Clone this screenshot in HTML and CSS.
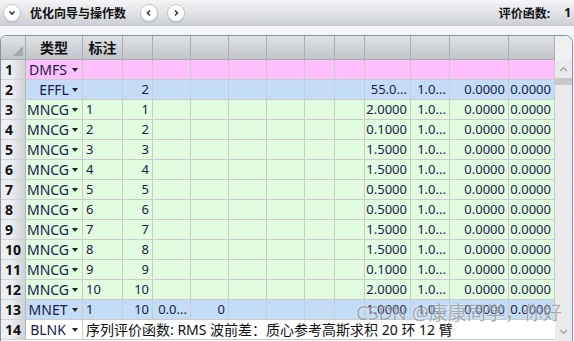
FILE: index.html
```html
<!DOCTYPE html>
<html lang="zh">
<head>
  <meta charset="UTF-8">
  <title>优化向导与操作数</title>
  <link rel="stylesheet" href="styles.css">
</head>
<body>

  <div class="toolbar">
    <button class="round">
      <svg width="10" height="10" viewBox="0 0 10 10"><path d="M2.5 3.5 L5 6 L7.5 3.5" fill="none" stroke="#3a3a3a" stroke-width="1.6"/></svg>
    </button>
    <span class="title">优化向导与操作数</span>
    <button class="round nav">
      <svg width="10" height="10" viewBox="0 0 10 10"><path d="M6 2.5 L3.5 5 L6 7.5" fill="none" stroke="#3a3a3a" stroke-width="1.6"/></svg>
    </button>
    <button class="round">
      <svg width="10" height="10" viewBox="0 0 10 10"><path d="M4 2.5 L6.5 5 L4 7.5" fill="none" stroke="#3a3a3a" stroke-width="1.6"/></svg>
    </button>
    <span class="spacer"></span>
    <span class="merit">评价函数:</span>
    <span class="merit-val">1</span>
  </div>

  <div class="panel">
    <div class="grid">
      <div class="row head">
        <div class="c corner"><span class="tri"></span></div>
        <div class="c">类型</div><div class="c">标注</div>
        <div class="c"></div><div class="c"></div><div class="c"></div><div class="c"></div><div class="c"></div>
        <div class="c"></div><div class="c"></div><div class="c"></div><div class="c"></div><div class="c"></div><div class="c"></div>
      </div>

      <div class="row pink">
        <div class="c n">1</div>
        <div class="c type"><span>DMFS</span><i></i></div>
        <div class="c"></div><div class="c"></div><div class="c"></div><div class="c"></div><div class="c"></div><div class="c"></div>
        <div class="c"></div><div class="c"></div><div class="c"></div><div class="c"></div><div class="c"></div><div class="c"></div>
      </div>

      <div class="row blue">
        <div class="c n">2</div>
        <div class="c type shift"><span>EFFL</span><i></i></div>
        <div class="c"></div><div class="c r">2</div><div class="c"></div><div class="c"></div><div class="c"></div><div class="c"></div>
        <div class="c"></div><div class="c"></div><div class="c r">55.0...</div><div class="c r">1.0...</div><div class="c r">0.0000</div><div class="c r">0.0000</div>
      </div>

      <div class="row green">
        <div class="c n">3</div>
        <div class="c type"><span>MNCG</span><i></i></div>
        <div class="c l">1</div><div class="c r">1</div><div class="c"></div><div class="c"></div><div class="c"></div><div class="c"></div>
        <div class="c"></div><div class="c"></div><div class="c r">2.0000</div><div class="c r">1.0...</div><div class="c r">0.0000</div><div class="c r">0.0000</div>
      </div>

      <div class="row green">
        <div class="c n">4</div>
        <div class="c type"><span>MNCG</span><i></i></div>
        <div class="c l">2</div><div class="c r">2</div><div class="c"></div><div class="c"></div><div class="c"></div><div class="c"></div>
        <div class="c"></div><div class="c"></div><div class="c r">0.1000</div><div class="c r">1.0...</div><div class="c r">0.0000</div><div class="c r">0.0000</div>
      </div>

      <div class="row green">
        <div class="c n">5</div>
        <div class="c type"><span>MNCG</span><i></i></div>
        <div class="c l">3</div><div class="c r">3</div><div class="c"></div><div class="c"></div><div class="c"></div><div class="c"></div>
        <div class="c"></div><div class="c"></div><div class="c r">1.5000</div><div class="c r">1.0...</div><div class="c r">0.0000</div><div class="c r">0.0000</div>
      </div>

      <div class="row green">
        <div class="c n">6</div>
        <div class="c type"><span>MNCG</span><i></i></div>
        <div class="c l">4</div><div class="c r">4</div><div class="c"></div><div class="c"></div><div class="c"></div><div class="c"></div>
        <div class="c"></div><div class="c"></div><div class="c r">1.5000</div><div class="c r">1.0...</div><div class="c r">0.0000</div><div class="c r">0.0000</div>
      </div>

      <div class="row green">
        <div class="c n">7</div>
        <div class="c type"><span>MNCG</span><i></i></div>
        <div class="c l">5</div><div class="c r">5</div><div class="c"></div><div class="c"></div><div class="c"></div><div class="c"></div>
        <div class="c"></div><div class="c"></div><div class="c r">0.5000</div><div class="c r">1.0...</div><div class="c r">0.0000</div><div class="c r">0.0000</div>
      </div>

      <div class="row green">
        <div class="c n">8</div>
        <div class="c type"><span>MNCG</span><i></i></div>
        <div class="c l">6</div><div class="c r">6</div><div class="c"></div><div class="c"></div><div class="c"></div><div class="c"></div>
        <div class="c"></div><div class="c"></div><div class="c r">0.5000</div><div class="c r">1.0...</div><div class="c r">0.0000</div><div class="c r">0.0000</div>
      </div>

      <div class="row green">
        <div class="c n">9</div>
        <div class="c type"><span>MNCG</span><i></i></div>
        <div class="c l">7</div><div class="c r">7</div><div class="c"></div><div class="c"></div><div class="c"></div><div class="c"></div>
        <div class="c"></div><div class="c"></div><div class="c r">1.5000</div><div class="c r">1.0...</div><div class="c r">0.0000</div><div class="c r">0.0000</div>
      </div>

      <div class="row green">
        <div class="c n">10</div>
        <div class="c type"><span>MNCG</span><i></i></div>
        <div class="c l">8</div><div class="c r">8</div><div class="c"></div><div class="c"></div><div class="c"></div><div class="c"></div>
        <div class="c"></div><div class="c"></div><div class="c r">1.5000</div><div class="c r">1.0...</div><div class="c r">0.0000</div><div class="c r">0.0000</div>
      </div>

      <div class="row green">
        <div class="c n">11</div>
        <div class="c type"><span>MNCG</span><i></i></div>
        <div class="c l">9</div><div class="c r">9</div><div class="c"></div><div class="c"></div><div class="c"></div><div class="c"></div>
        <div class="c"></div><div class="c"></div><div class="c r">0.1000</div><div class="c r">1.0...</div><div class="c r">0.0000</div><div class="c r">0.0000</div>
      </div>

      <div class="row green">
        <div class="c n">12</div>
        <div class="c type"><span>MNCG</span><i></i></div>
        <div class="c l">10</div><div class="c r">10</div><div class="c"></div><div class="c"></div><div class="c"></div><div class="c"></div>
        <div class="c"></div><div class="c"></div><div class="c r">2.0000</div><div class="c r">1.0...</div><div class="c r">0.0000</div><div class="c r">0.0000</div>
      </div>

      <div class="row blue">
        <div class="c n">13</div>
        <div class="c type"><span>MNET</span><i></i></div>
        <div class="c l">1</div><div class="c r">10</div><div class="c r">0.0...</div><div class="c r">0</div><div class="c"></div><div class="c"></div>
        <div class="c"></div><div class="c"></div><div class="c r">1.0000</div><div class="c r">1.0...</div><div class="c r">0.0000</div><div class="c r">0.0000</div>
      </div>

      <div class="row white">
        <div class="c n">14</div>
        <div class="c type"><span>BLNK</span><i></i></div>
        <div class="c l comment">序列评价函数: RMS 波前差：质心参考高斯求积 20 环 12 臂</div>
      </div>
    </div>

    <div class="scrollbar">
      <div class="sb-top"></div>
      <div class="sb-up">
        <svg width="9" height="6" viewBox="0 0 9 6"><path d="M1 5 L4.5 1.5 L8 5" fill="none" stroke="#a0a0a0" stroke-width="1.2"/></svg>
      </div>
      <div class="sb-thumb"></div>
      <div class="sb-track"></div>
      <div class="sb-down">
        <svg width="9" height="6" viewBox="0 0 9 6"><path d="M1 1 L4.5 4.5 L8 1" fill="none" stroke="#a0a0a0" stroke-width="1.2"/></svg>
      </div>
    </div>
  </div>

  <div class="watermark">CSDN @康康同学，你好</div>

</body>
</html>
```

FILE: styles.css
```css
html, body {
  margin: 0;
  padding: 0;
  overflow: hidden;
}

body {
  position: relative;
  width: 574px;
  height: 341px;
  background: #f4f6f9;
  font-family: "Noto Sans", "Noto Sans CJK SC", sans-serif;
  color: #1a1a4c;
}

.toolbar {
  display: flex;
  align-items: center;
  height: 26px;
  padding: 0 3px;
  box-sizing: border-box;
  background: linear-gradient(#f4f5f7, #cdd0d5);
  border-bottom: 1px solid #c3c7cc;
}

.round {
  width: 18px;
  height: 18px;
  padding: 0;
  border: 1px solid #c4c7cc;
  border-radius: 50%;
  background: radial-gradient(circle at 50% 35%, #ffffff 55%, #e9eaec);
  display: flex;
  align-items: center;
  justify-content: center;
  box-shadow: 0 1px 1px rgba(0,0,0,0.12);
}

.title {
  margin-left: 9px;
  margin-right: 14px;
  font-size: 12px;
  font-weight: bold;
  color: #111;
}

.nav {
  margin-right: 9px;
}

.spacer {
  flex: 1;
}

.merit {
  font-size: 12px;
  font-weight: bold;
  color: #111;
}

.merit-val {
  margin-left: 14px;
  font-size: 12px;
  font-weight: bold;
  color: #111;
}

.panel {
  display: flex;
  width: 573px;
  height: 306px;
  margin-top: 9px;
  box-sizing: border-box;
  border: 1px solid #8394a8;
  border-bottom: none;
  border-radius: 6px 8px 0 0;
  overflow: hidden;
  background: #fff;
}

.grid {
  width: 554px;
}

.row {
  display: grid;
  grid-template-columns: 25px 57px 40px 30px 38px 38px 38px 38px 30px 30px 46px 39px 59px 46px;
  height: 20px;
}

.c {
  box-sizing: border-box;
  border-right: 1px solid #cbcbcb;
  border-bottom: 1px solid #cbcbcb;
  font-size: 13px;
  line-height: 19px;
  white-space: nowrap;
  overflow: hidden;
}

.r {
  text-align: right;
  padding-right: 3px;
}

.l {
  padding-left: 3px;
}

.head {
  height: 24px;
}

.head .c {
  font-size: 14px;
  line-height: 23px;
  text-align: center;
  font-weight: bold;
  color: #111;
  background: linear-gradient(#e0e2e6, #c1c4c9);
  border-right: 1px solid #a9adb2;
  border-bottom: 1px solid #a9adb2;
}

.head .corner {
  display: flex;
  justify-content: flex-end;
  align-items: flex-end;
  padding: 0 2px 3px 0;
}

.tri {
  width: 10px;
  height: 10px;
  background: #a6aaaf;
  clip-path: polygon(100% 0, 100% 100%, 0 100%);
}

.n {
  padding-left: 4px;
  font-size: 14px;
  font-weight: bold;
  color: #111;
  background: linear-gradient(to right, #eeeff1 40%, #cfd2d6);
  border-right: 1px solid #b4b8bd;
  border-bottom: 1px solid #d0d2d5;
}

.type {
  display: flex;
  align-items: center;
  font-size: 14px;
}

.type span {
  width: 44px;
  text-align: center;
  overflow: hidden;
}

.type.shift span {
  padding-left: 12px;
  width: 32px;
}

.type i {
  flex: none;
  width: 0;
  height: 0;
  margin-left: 2px;
  border-left: 3.5px solid transparent;
  border-right: 3.5px solid transparent;
  border-top: 4px solid #222;
}

.pink .c:not(.n) {
  background: #fdc0fd;
}

.blue .c:not(.n) {
  background: #c3ddf7;
}

.green .c:not(.n) {
  background: #e1fcdf;
}

.white .c:not(.n) {
  background: #fff;
}

.comment {
  grid-column: 3 / -1;
  border-right: none;
  font-size: 14px;
  color: #111;
}

.scrollbar {
  display: flex;
  flex-direction: column;
  width: 17px;
  background: #ebebeb;
}

.sb-top {
  height: 24px;
  background: #f0f0f0;
}

.sb-up, .sb-down {
  height: 18px;
  display: flex;
  align-items: center;
  justify-content: center;
}

.sb-thumb {
  height: 7px;
  background: #c9c9c9;
}

.sb-track {
  flex: 1;
}

.watermark {
  position: absolute;
  left: 356px;
  top: 298px;
  font-size: 19px;
  color: rgba(110, 110, 110, 0.55);
  text-shadow: 0 0 2px rgba(255,255,255,0.8);
  pointer-events: none;
}
```
